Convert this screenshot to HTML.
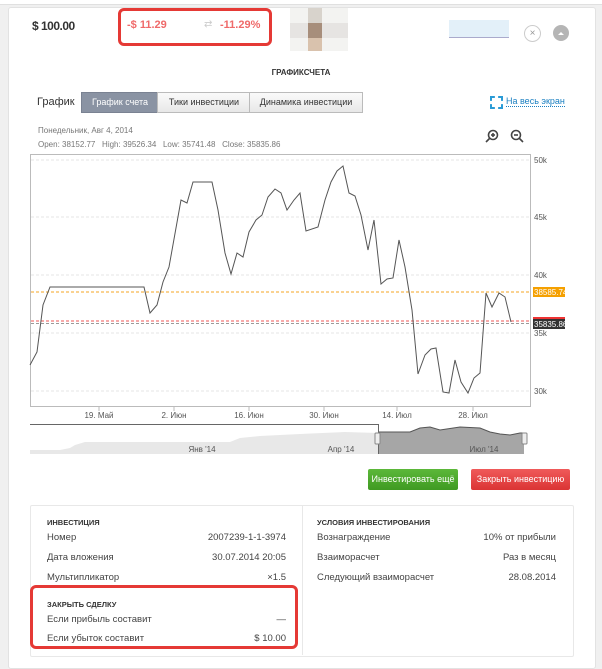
<!DOCTYPE html>
<html><head><meta charset="utf-8"><style>
body{margin:0;width:602px;height:650px;background:#f0f0f0;font-family:"Liberation Sans","DejaVu Sans",sans-serif;position:relative;overflow:hidden}
.a{position:absolute}
.card{left:8px;top:7px;width:586px;height:660px;background:#fff;border:1px solid #e2e2e2;border-radius:3px}
.top{left:0;top:0;width:602px;height:4px;background:#fff;border-bottom:1px solid #e0e0e0}
.t{font-size:9.5px;color:#444;white-space:nowrap}
.tab{top:92px;height:19px;border:1px solid #bbb;font-size:9px;line-height:19px;text-align:center;color:#333;background:linear-gradient(#fafafa,#e8e8e8)}
.btn{top:469px;height:21px;border-radius:2px;color:#fff;font-size:9px;line-height:21px;text-align:center}
</style></head><body>
<div class="a top"></div>
<div class="a card"></div>
<div class="a" style="left:32px;top:19px;font-size:12px;font-weight:bold;color:#333;letter-spacing:-0.5px">$ 100.00</div>
<div class="a" style="left:118px;top:8px;width:148px;height:32px;border:3px solid #e53935;border-radius:6px"></div>
<div class="a" style="left:127px;top:19px;font-size:11px;font-weight:bold;color:#ef6a6a">-$ 11.29</div>
<div class="a" style="left:204px;top:19px;font-size:10px;color:#ccc">⇄</div>
<div class="a" style="left:220px;top:19px;font-size:11px;font-weight:bold;color:#ef6a6a">-11.29%</div>
<div class="a" style="left:290px;top:8px;width:58px;height:43px;background:#f3f3f1"></div>
<div class="a" style="left:290px;top:23px;width:58px;height:15px;background:#e6e4e2"></div>
<div class="a" style="left:308px;top:8px;width:14px;height:43px;background:#d8d3cc"></div>
<div class="a" style="left:308px;top:23px;width:14px;height:15px;background:#a78e7b"></div>
<div class="a" style="left:308px;top:38px;width:14px;height:13px;background:#d9c2ad"></div>
<div class="a" style="left:449px;top:20px;width:60px;height:17px;background:#e3f0f9;border-bottom:1px solid #aac"></div>
<div class="a" style="left:524px;top:25px;width:15px;height:15px;border:1px solid #ccc;border-radius:50%;text-align:center;font-size:10px;line-height:15px;color:#999">×</div>
<div class="a" style="left:553px;top:25px;width:16px;height:16px;background:#b5b5b5;border-radius:50%"></div>
<div class="a" style="left:558px;top:29px;width:0;height:0;border:3px solid transparent;border-bottom:3px solid #fff"></div>
<div class="a" style="left:0;width:602px;top:68px;text-align:center;font-size:8px;font-weight:bold;color:#333">ГРАФИКСЧЕТА</div>
<div class="a" style="left:37px;top:96px;font-size:11px;color:#333">График</div>
<div class="a tab" style="left:81px;width:76px;background:#8a93a3;color:#fff;border-color:#7a8292">График счета</div>
<div class="a tab" style="left:157px;width:92px">Тики инвестиции</div>
<div class="a tab" style="left:249px;width:112px">Динамика инвестиции</div>
<div class="a" style="left:490px;top:96px;width:9px;height:9px;border:2px dashed #2a9bd6"></div>
<div class="a" style="left:506px;top:96px;font-size:9px;color:#1a7fc1;border-bottom:1px dotted #1a7fc1">На весь экран</div>
<div class="a" style="left:38px;top:126px;font-size:8px;color:#777">Понедельник, Авг 4, 2014</div>
<div class="a" style="left:38px;top:140px;font-size:8px;color:#777">Open: 38152.77 &nbsp; High: 39526.34 &nbsp; Low: 35741.48 &nbsp; Close: 35835.86</div>
<svg class="a" style="left:0;top:0" width="602" height="650">
<g fill="none" stroke="#444" stroke-width="1.6"><circle cx="493" cy="135" r="4.5"/><line x1="489.5" y1="138.5" x2="486" y2="142"/><line x1="491" y1="135" x2="495" y2="135"/><line x1="493" y1="133" x2="493" y2="137"/>
<circle cx="516" cy="135" r="4.5"/><line x1="519.5" y1="138.5" x2="523" y2="142"/><line x1="514" y1="135" x2="518" y2="135"/></g>
<rect x="30.5" y="154.5" width="500" height="252" fill="none" stroke="#bbb"/>
<g stroke="#e4e4e4" stroke-dasharray="3,2"><line x1="31" x2="530" y1="160" y2="160"/><line x1="31" x2="530" y1="217" y2="217"/><line x1="31" x2="530" y1="275" y2="275"/><line x1="31" x2="530" y1="333" y2="333"/><line x1="31" x2="530" y1="391" y2="391"/></g>
<line x1="31" x2="530" y1="292" y2="292" stroke="#f5a623" stroke-dasharray="3,2"/>
<line x1="31" x2="530" y1="321" y2="321" stroke="#e55" stroke-dasharray="3,2"/>
<line x1="31" x2="530" y1="323.5" y2="323.5" stroke="#999" stroke-dasharray="3,2"/>
<polyline fill="none" stroke="#555" stroke-width="1" points="30,365 37,352 43,305 50,287 144,287 150,313 157,305 163,282 169,267 181,200 187,203 193,182 212,182 218,210 225,253 231,274 237,253 243,257 249,232 256,220 262,215 268,197 275,189 281,193 287,210 294,200 300,193 306,231 318,227 325,200 331,182 337,171 343,166 349,193 355,196 361,215 368,250 374,220 381,284 387,279 393,278 399,240 405,267 412,310 418,374 425,355 431,349 436,348 443,392 449,393 455,360 461,382 468,393 474,378 480,373 486,293 492,307 499,293 505,297 511,322"/>
<g font-size="8" fill="#555" font-family="Liberation Sans"><text x="534" y="163">50k</text><text x="534" y="220">45k</text><text x="534" y="278">40k</text><text x="534" y="336">35k</text><text x="534" y="394">30k</text></g>
<rect x="533" y="287" width="32" height="10" fill="#f5a000"/><text x="534" y="295" font-size="8" fill="#fff">38585.74</text>
<rect x="533" y="317" width="32" height="2" fill="#e33"/>
<rect x="533" y="319" width="32" height="10" fill="#333"/><text x="534" y="327" font-size="8" fill="#fff">35835.86</text>
<g stroke="#bbb"><line x1="99" x2="99" y1="407" y2="411"/><line x1="174" x2="174" y1="407" y2="411"/><line x1="249" x2="249" y1="407" y2="411"/><line x1="324" x2="324" y1="407" y2="411"/><line x1="397" x2="397" y1="407" y2="411"/><line x1="473" x2="473" y1="407" y2="411"/></g>
<g font-size="8" fill="#555" text-anchor="middle"><text x="99" y="418">19. Май</text><text x="174" y="418">2. Июн</text><text x="249" y="418">16. Июн</text><text x="324" y="418">30. Июн</text><text x="397" y="418">14. Июл</text><text x="473" y="418">28. Июл</text></g>
<rect x="30" y="424" width="348" height="30" fill="#fff"/>
<polygon points="30,450 60,450 70,448 75,445 85,442 230,442 240,438 260,436 300,434 345,432 378,433 378,454 30,454" fill="#e8e8e8"/>
<polygon points="378,432 400,432 410,432 420,428 430,427 440,430 460,427 480,428 490,432 500,434 510,435 520,433 524,433 524,454 378,454" fill="#a6a6a6"/>
<polyline points="378,432 400,432 410,432 420,428 430,427 440,430 460,427 480,428 490,432 500,434 510,435 520,433 524,433" fill="none" stroke="#555"/>
<line x1="30" x2="378" y1="424.5" y2="424.5" stroke="#666"/>
<line x1="378.5" x2="378.5" y1="424" y2="454" stroke="#666"/>
<rect x="375" y="433" width="5" height="11" rx="1" fill="#eee" stroke="#888"/>
<rect x="522" y="433" width="5" height="11" rx="1" fill="#eee" stroke="#888"/>
<g font-size="8" fill="#555" text-anchor="middle"><text x="202" y="452">Янв '14</text><text x="341" y="452">Апр '14</text><text x="484" y="452">Июл '14</text></g>
</svg>
<div class="a btn" style="left:368px;width:90px;background:linear-gradient(#5cb83a,#3f9a22)">Инвестировать ещё</div>
<div class="a btn" style="left:471px;width:99px;background:linear-gradient(#f05a5a,#db3434)">Закрыть инвестицию</div>
<div class="a" style="left:30px;top:505px;width:542px;height:150px;border:1px solid #e8e8e8;border-radius:2px"></div>
<div class="a" style="left:302px;top:505px;width:1px;height:150px;background:#e8e8e8"></div>
<div class="a" style="left:47px;top:518px;font-size:7.5px;font-weight:bold;color:#333">ИНВЕСТИЦИЯ</div>
<div class="a t" style="left:47px;top:532px">Номер</div><div class="a t" style="left:200px;top:532px;width:86px;text-align:right">2007239-1-1-3974</div>
<div class="a t" style="left:47px;top:552px">Дата вложения</div><div class="a t" style="left:200px;top:552px;width:86px;text-align:right">30.07.2014 20:05</div>
<div class="a t" style="left:47px;top:572px">Мультипликатор</div><div class="a t" style="left:230px;top:572px;width:56px;text-align:right">×1.5</div>
<div class="a" style="left:317px;top:518px;font-size:7.5px;font-weight:bold;color:#333">УСЛОВИЯ ИНВЕСТИРОВАНИЯ</div>
<div class="a t" style="left:317px;top:532px">Вознаграждение</div><div class="a t" style="left:460px;top:532px;width:96px;text-align:right">10% от прибыли</div>
<div class="a t" style="left:317px;top:552px">Взаиморасчет</div><div class="a t" style="left:460px;top:552px;width:96px;text-align:right">Раз в месяц</div>
<div class="a t" style="left:317px;top:572px">Следующий взаиморасчет</div><div class="a t" style="left:460px;top:572px;width:96px;text-align:right">28.08.2014</div>
<div class="a" style="left:30px;top:585px;width:262px;height:58px;border:3px solid #e53935;border-radius:6px"></div>
<div class="a" style="left:47px;top:600px;font-size:7.5px;font-weight:bold;color:#333">ЗАКРЫТЬ СДЕЛКУ</div>
<div class="a t" style="left:47px;top:614px">Если прибыль составит</div><div class="a t" style="left:230px;top:614px;width:56px;text-align:right">—</div>
<div class="a t" style="left:47px;top:633px">Если убыток составит</div><div class="a t" style="left:230px;top:633px;width:56px;text-align:right">$ 10.00</div>
</body></html>
